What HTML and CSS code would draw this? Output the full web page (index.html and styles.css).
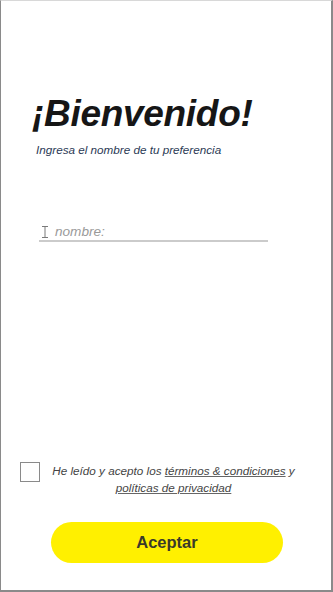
FILE: index.html
```html
<!DOCTYPE html>
<html lang="es">
<head>
<meta charset="utf-8">
<link rel="stylesheet" href="styles.css">
</head>
<body>
<div class="screen">
  <header class="intro">
    <h1 class="title">¡Bienvenido!</h1>
    <p class="subtitle">Ingresa el nombre de tu preferencia</p>
  </header>
  <div class="field">
    <svg class="caret" width="8" height="12" viewBox="0 0 8 12"><path d="M1 0.5h6M1 11.5h6M4 0.5v11" stroke="#7a7a7a" stroke-width="1" fill="none"/></svg>
    <span class="placeholder">nombre:</span>
  </div>
  <div class="spacer"></div>
  <div class="terms">
    <span class="checkbox"></span>
    <p class="terms-text">He leído y acepto los <u>términos &amp; condiciones</u> y <u>políticas de privacidad</u></p>
  </div>
  <button class="accept">Aceptar</button>
</div>
</body>
</html>
```

FILE: styles.css
```css
html, body {
  margin: 0;
  padding: 0;
  background: #fff;
}
.screen {
  box-sizing: border-box;
  width: 333px;
  height: 592px;
  border-top: 1px solid #d8d8d8;
  border-left: 1px solid #8a8a8a;
  border-right: 2px solid #8a8a8a;
  border-bottom: 2px solid #8a8a8a;
  display: flex;
  flex-direction: column;
  font-family: "Liberation Sans", Arial, sans-serif;
}
.intro {
  padding: 91px 0 0 31px;
}
.title {
  margin: 0;
  font-size: 37px;
  line-height: 44px;
  font-weight: bold;
  font-style: italic;
  color: #161616;
  letter-spacing: -0.3px;
}
.subtitle {
  margin: 7px 0 0 4px;
  font-size: 11.7px;
  line-height: 14px;
  font-style: italic;
  color: #2b3a55;
}
.field {
  margin: 66px 0 0 38px;
  width: 227px;
  border-bottom: 2px solid #cbcbcb;
  display: flex;
  align-items: center;
  gap: 6px;
  padding-left: 2px;
  height: 17px;
}
.caret {
  display: block;
}
.placeholder {
  font-size: 13.6px;
  font-style: italic;
  color: #9a9a9a;
}
.spacer {
  flex: 1;
}
.terms {
  display: flex;
  align-items: flex-start;
  padding: 0 0 0 19px;
}
.checkbox {
  box-sizing: border-box;
  width: 20px;
  height: 20px;
  border: 1px solid #8a8a8a;
  flex: none;
}
.terms-text {
  margin: 0;
  flex: 1;
  text-align: center;
  font-size: 11.7px;
  line-height: 17px;
  font-style: italic;
  color: #444;
  padding: 0 28px 0 4px;
}
.terms-text u {
  text-decoration-color: #666;
}
.accept {
  margin: 26px 0 27px 50px;
  width: 232px;
  height: 41px;
  border: none;
  border-radius: 21px;
  background: #fff000;
  font-family: "Liberation Sans", Arial, sans-serif;
  font-size: 16.5px;
  font-weight: bold;
  color: #3a3a2a;
  padding: 0;
}
```
